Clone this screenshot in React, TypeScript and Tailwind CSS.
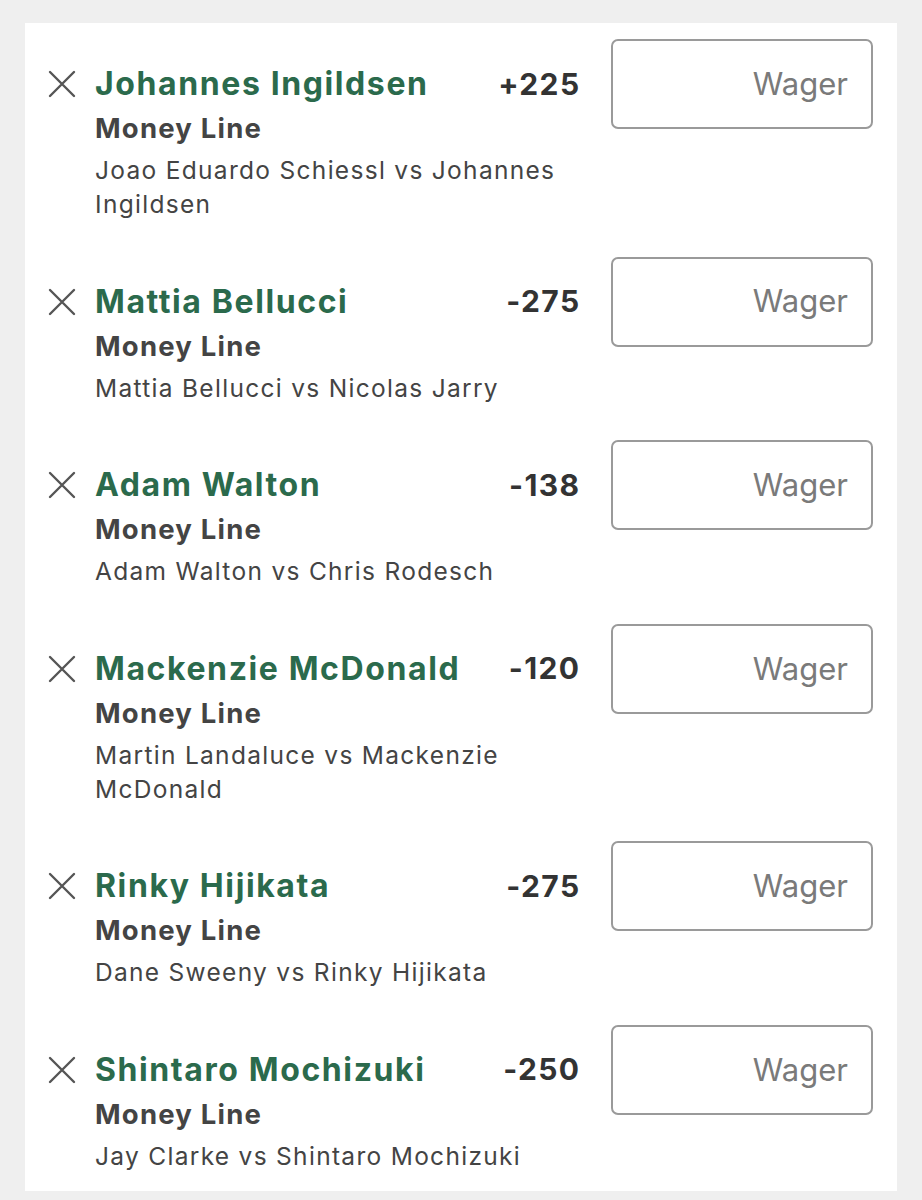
const bets = [
  { name: 'Johannes Ingildsen', odds: '+225', match: 'Joao Eduardo Schiessl vs Johannes Ingildsen' },
  { name: 'Mattia Bellucci', odds: '-275', match: 'Mattia Bellucci vs Nicolas Jarry' },
  { name: 'Adam Walton', odds: '-138', match: 'Adam Walton vs Chris Rodesch' },
  { name: 'Mackenzie McDonald', odds: '-120', match: 'Martin Landaluce vs Mackenzie McDonald' },
  { name: 'Rinky Hijikata', odds: '-275', match: 'Dane Sweeny vs Rinky Hijikata' },
  { name: 'Shintaro Mochizuki', odds: '-250', match: 'Jay Clarke vs Shintaro Mochizuki' },
];

const CloseIcon = () => (
  <svg width="28" height="28" viewBox="0 0 28 28" fill="none" stroke="#555" strokeWidth="2.4" strokeLinecap="round">
    <path d="M2 2 L26 26 M26 2 L2 26" />
  </svg>
);

export default function App() {
  return (
    <div className="h-[1200px] overflow-hidden bg-[#efefef] pt-[23px] font-['Inter',sans-serif]">
      <div className="ml-[25px] w-[872px] h-[1168px] bg-white pt-[16px] pr-[24px]">
        {bets.map((b) => (
          <div key={b.name} className="flex items-start pb-[35.6px]">
            <div className="flex flex-1 items-start pt-[23px]">
              <div className="w-[70px] h-[44px] pl-[23px] flex items-center">
                <CloseIcon />
              </div>
              <div className="flex-1 min-w-0">
                <div className="flex justify-between items-center h-[44px]">
                  <span className="text-[32px] font-bold text-[#2b6a4c] tracking-[1.6px] whitespace-nowrap">{b.name}</span>
                  <span className="text-[30px] font-bold text-[#333] tracking-[1.4px] -mr-[1.5px]">{b.odds}</span>
                </div>
                <div className="h-[44px] leading-[44px] text-[27.5px] font-bold text-[#444] tracking-[1.2px]">Money Line</div>
                <div className="mt-[3px] leading-[34px] text-[24.5px] text-[#444] tracking-[1.3px]">{b.match}</div>
              </div>
            </div>
            <div className="ml-[32px] w-[262px] h-[90px] border-2 border-[#9a9a9a] rounded-[7px] flex items-center justify-end pr-[23px] text-[31px] text-[#7a7a7a]">
              Wager
            </div>
          </div>
        ))}
      </div>
    </div>
  );
}
